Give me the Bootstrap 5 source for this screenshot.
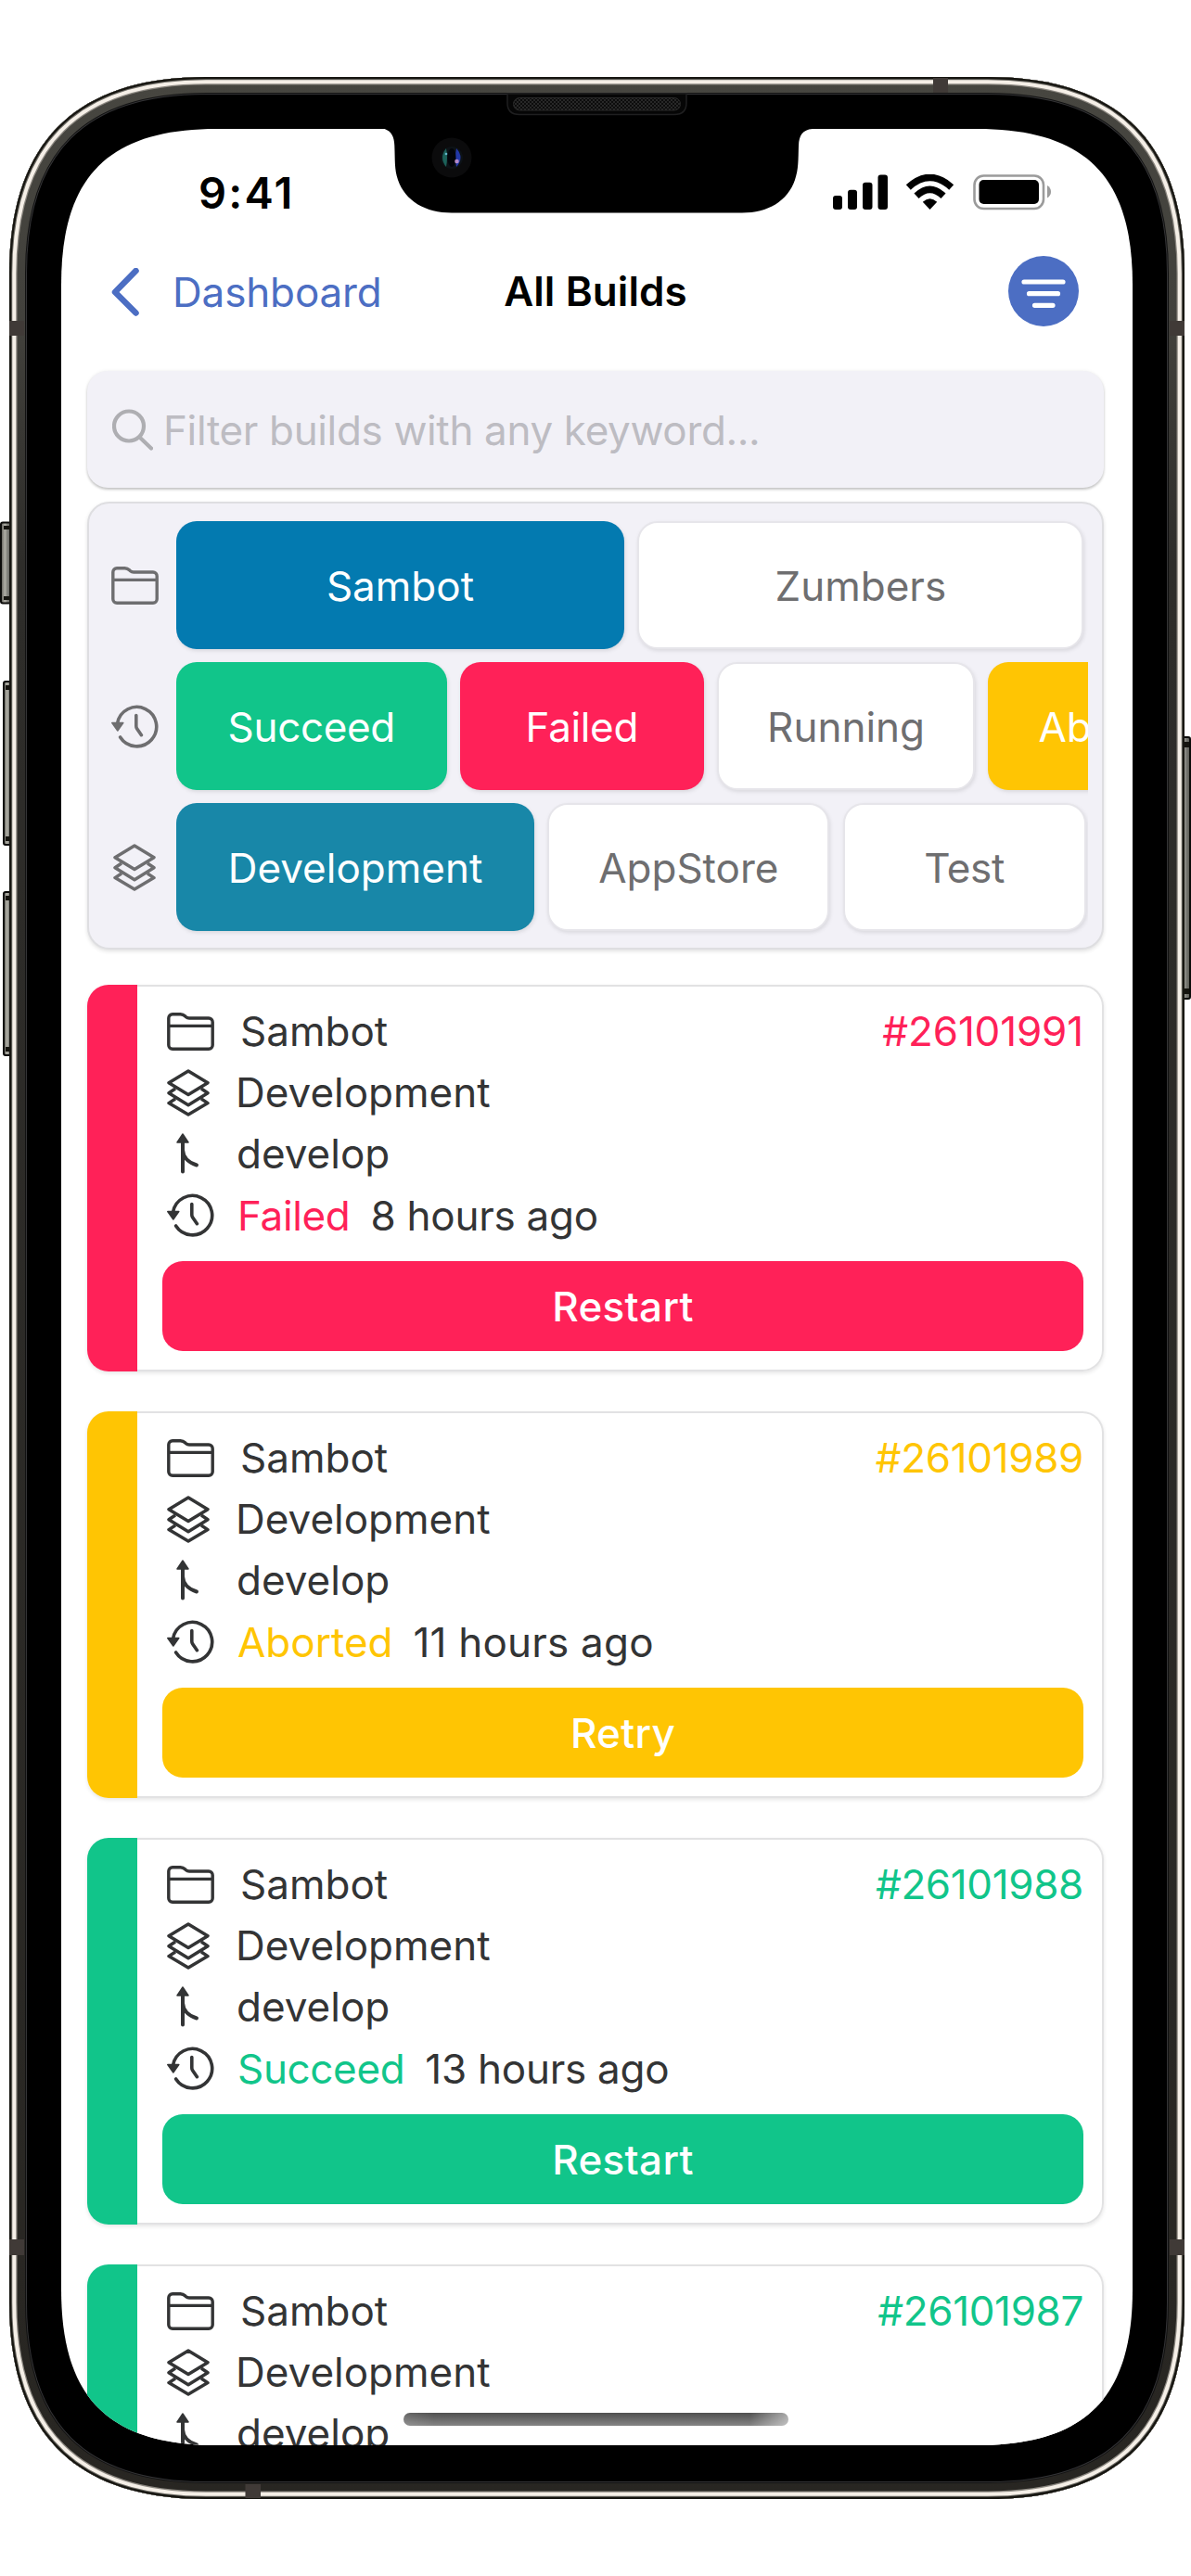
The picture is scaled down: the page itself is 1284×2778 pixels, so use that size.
<!DOCTYPE html>
<html lang="en">
<head>
<meta charset="utf-8">
<meta name="viewport" content="width=device-width, initial-scale=1">
<title>All Builds</title>
<link href="https://cdn.jsdelivr.net/npm/bootstrap@5.3.0/dist/css/bootstrap.min.css" rel="stylesheet">
<style>
  :root { --red:#ff2158; --amber:#ffc503; --green:#11c58a; --ink:#333435; --blue:#4c6ec3; --sheet:#f2f1f7; }
  body { background:#fff; font-family:Inter, "Liberation Sans", sans-serif; font-size:44px; line-height:1; color:var(--ink); }
  .phone { width:1284px; height:2778px; padding:139px 63px 0 66px; overflow:hidden; }
  .phone-art { left:0; top:0; pointer-events:none; }
  .phone-screen { width:1155px; height:2498px; background:#fff; overflow:hidden;
    clip-path:path("M0 168C0 51 51 0 168 0H987C1104 0 1155 51 1155 168V2330C1155 2447 1104 2498 987 2498H168C51 2498 0 2447 0 2330Z"); }
  .notch-art { left:0; top:0; }
  .status-bar { height:137px; padding:0 88px 0 148px; }
  .clock-text { font-size:47px; letter-spacing:2.2px; color:#000; }
  .top-nav { height:76px; padding:0 58px 0 53px; }
  .back-link { color:var(--blue); letter-spacing:-.15px; padding-top:2px; }
  .nav-title { left:0; right:3px; top:0; bottom:0; color:#000; letter-spacing:.1px; }
  .filter-btn { width:76px; height:76px; background:var(--blue); }
  .content-area { padding:48px 31px 0 28px; }
  .search-box { height:126px; border-radius:22px; background:var(--sheet); padding:1px 0 0 27px; color:#bdbcc2; letter-spacing:-.35px;
    box-shadow:0 2px 3px rgba(0,0,0,.22), 0 0 4px rgba(0,0,0,.06); }
  .search-box svg { margin-right:11px; }
  .filter-panel { margin-top:15px; height:483px; padding:19px 15px 18px 24px; gap:14px; border:2px solid #dedee1; border-radius:24px; background:var(--sheet);
    box-shadow:0 2px 4px rgba(0,0,0,.12); }
  .filter-row { height:138px; color:#6e6e70; }
  .filter-icon { width:70px; }
  .chip-strip { gap:14.3px; height:138px; min-width:0; overflow-x:clip; overflow-y:visible; }
  .chip { height:138px; padding-top:2px; border-radius:22px; background:#fff; border:2px solid #e6e5ea; color:#6e6e70; box-shadow:1px 2px 4px rgba(0,0,0,.1); }
  .chip-on { border-color:transparent; background-clip:border-box; background-origin:border-box; color:#fff; }
  .chip-blue { background-color:#037ab0; } .chip-teal { background-color:#1887a8; }
  .chip-green { background-color:var(--green); } .chip-red { background-color:var(--red); } .chip-amber { background-color:var(--amber); }
  .w-sambot { width:483px; } .w-zumbers { width:481px; }
  .w-succeed { width:291.5px; } .w-failed { width:263px; } .w-running { width:278px; } .w-aborted { width:298px; }
  .w-dev { width:386px; } .w-store { width:304px; } .w-test { width:262px; }
  .build-list { padding-top:38px; gap:43px; }
  .build { height:417px; border-radius:23px; box-shadow:0 2px 4px rgba(0,0,0,.1); --tone:var(--green); }
  .build-red { --tone:var(--red); } .build-amber { --tone:var(--amber); }
  .build-stripe { width:54px; background:var(--tone); border-radius:23px 0 0 23px; }
  .build-body { border:2px solid #e2e2e3; border-left:0; border-radius:0 23px 23px 0; padding:15px 20px 0 27px; background:#fff; }
  .build-line { height:66.2px; padding-left:5px; }
  .build-icon { width:74px; }
  .build-icon svg, .filter-icon svg { display:block; }
  .build-tone { color:var(--tone); }
  .build-id { color:var(--tone); letter-spacing:-.15px; }
  .when { margin-left:22px; letter-spacing:-.25px; }
  .build-btn, .build-btn:hover { margin-top:16px; height:97px; padding:2px 0 0; border-radius:22px; background:var(--tone); color:#fff; font-size:44px; line-height:1; font-weight:500; letter-spacing:.3px; }
  .nudge-1 { margin-left:1px; } .nudge-2 { margin-left:2px; } .nudge-5 { margin-left:5px; }
  .tight { letter-spacing:-.35px; } .airy { letter-spacing:.2px; }
  .home-bar { left:369px; top:2463px; width:415px; height:14px; border-radius:7px; background:linear-gradient(90deg,rgba(255,255,255,.12),transparent 8%,transparent 90%,rgba(255,255,255,.5)),linear-gradient(#505050,#848484); }
</style>
</head>
<body>
<svg width="0" height="0" class="position-absolute" fill="none">
  <symbol id="folder" viewBox="0 0 51 41"><path d="M1.8 6a4.2 4.2 0 0 1 4.2-4.2h8.5c2.5 0 3.6.6 5 2l1 1q1.4 1.2 3.5 1.2H45a4.2 4.2 0 0 1 4.2 4.2V35a4.2 4.2 0 0 1-4.2 4.2H6A4.2 4.2 0 0 1 1.8 35zM2 14.4h47" fill="none" stroke="currentColor" stroke-width="3.4"/></symbol>
  <symbol id="layers" viewBox="0 0 46 51"><path d="M23 2L44 14.7 23 27.6 2 14.7zM9 21L2 25.7l21 13 21-13L37 21M9 32l-7 4.600 21 12.400 21-12.400L37 32" fill="none" stroke="currentColor" stroke-width="3.5" stroke-linejoin="round"/></symbol>
  <symbol id="branch" viewBox="0 0 25 44"><path d="M7 7v34.500M7 18c.5 9 7 14 15 16.500" fill="none" stroke="currentColor" stroke-width="4" stroke-linecap="round"/><path d="M7 1l6 9H1z" fill="currentColor" stroke="currentColor" stroke-width="1.500" stroke-linejoin="round"/></symbol>
  <symbol id="history" viewBox="0 0 51 47"><path d="M6.600 20A21.200 21.200 0 1 1 9.600 35M26.800 11.500V23q0 1.500.8 2.700l4.800 7" fill="none" stroke="currentColor" stroke-width="3.600" stroke-linecap="round"/><path d="M.8 19.500h12L6.800 28z" fill="currentColor" stroke="currentColor" stroke-width="1.500" stroke-linejoin="round"/></symbol>
</svg>

<div class="phone position-relative">
  <svg class="phone-art position-absolute" width="1284" height="2778" viewBox="0 0 1284 2778" fill="none">
    <defs>
      <linearGradient id="steel" x1="0" y1="0" x2="0" y2="1"><stop offset="0" stop-color="#474640"/><stop offset=".1" stop-color="#42413c"/><stop offset=".2" stop-color="#2e2d2a"/><stop offset="1" stop-color="#282622"/></linearGradient>
      <linearGradient id="keyL" x1="0" y1="0" x2="1" y2="0"><stop offset="0" stop-color="#55544f"/><stop offset=".35" stop-color="#b0afa6"/><stop offset=".6" stop-color="#7d7d78"/><stop offset="1" stop-color="#55554f"/></linearGradient>
      <path id="body" d="M10 295C10 154 81 83 222 83H1065C1206 83 1277 154 1277 295V2483C1277 2624 1206 2695 1065 2695H222C81 2695 10 2624 10 2483Z"/>
      <clipPath id="bodyClip"><use href="#body"/></clipPath>
    </defs>
    <g stroke="#0b0b09" stroke-width="2" fill="url(#keyL)">
      <rect x="1" y="563.500" width="12" height="87" rx="2"/>
      <rect x="4" y="735" width="10" height="176" rx="2"/>
      <rect x="4" y="962" width="10" height="176" rx="2"/>
      <rect x="1272" y="795" width="11" height="282" rx="2"/>
    </g>
    <g fill="#15140f">
      <path d="M4 567h8v4H4zM4 643h8v4H4zM6 739h6v5H6zM6 902h6v5H6zM6 966h6v5H6zM6 1129h6v5H6zM1276 800h6v6h-6zM1276 1066h6v6h-6z"/>
    </g>
    <use href="#body" fill="#000"/>
    <g clip-path="url(#bodyClip)">
      <use href="#body" stroke="#343436" stroke-width="38"/>
      <use href="#body" stroke="#111" stroke-width="36"/>
      <use href="#body" stroke="url(#steel)" stroke-width="34"/>
      <use href="#body" stroke="#8b8780" stroke-width="17"/>
      <use href="#body" stroke="#f5efe7" stroke-width="14.500"/>
      <use href="#body" stroke="#6d6b65" stroke-width="6.500"/>
      <use href="#body" stroke="#171611" stroke-width="4.500"/>
      <path fill="#403a37" d="M10 346h16v16H10zM1261 346h16v16h-16zM10 2415h16v17H10zM1261 2415h16v17h-16zM1006 84h16v16h-16zM264.500 2679h16.500v15h-16.500z"/>
    </g>
  </svg>

  <div class="phone-screen position-relative">
    <div class="status-bar d-flex align-items-center justify-content-between">
      <span class="clock-text fw-semibold">9:41</span>
      <svg width="235" height="40" viewBox="898 188 235 40" fill="none">
        <g fill="#000"><rect x="898" y="211" width="10" height="15" rx="3"/><rect x="914" y="204.700" width="10" height="21.300" rx="3"/><rect x="930" y="196.700" width="10.500" height="29.300" rx="3"/><rect x="946.500" y="188.500" width="10.500" height="37.500" rx="3"/>
        <path d="M1002.500 226L994.800 217.800Q1002.500 210.800 1010.200 217.800Z"/></g>
        <path d="M979.300 202Q1002.500 181 1025.700 202M988 211.300Q1002.500 197.500 1017 211.300" stroke="#000" stroke-width="7.400"/>
        <rect x="1050.500" y="189.500" width="74.500" height="35.500" rx="10" stroke="#9b9b9b" stroke-width="2.600"/>
        <rect x="1055.500" y="194" width="64.500" height="26" rx="5" fill="#000"/>
        <path d="M1129 200q4 2.500 4 6.800t-4 6.800z" fill="#9b9b9b"/>
      </svg>
    </div>
    <div class="top-nav position-relative d-flex align-items-center justify-content-between">
      <a class="back-link d-flex align-items-center text-decoration-none position-relative z-1" href="#">
        <svg width="67" height="52" viewBox="0 0 67 52" fill="none"><path d="M27.500 3L5 26l22.500 22.500" stroke="currentColor" stroke-width="6.500" stroke-linecap="round" stroke-linejoin="round"/></svg>
        <span>Dashboard</span>
      </a>
      <div class="nav-title position-absolute d-flex align-items-center justify-content-center fw-semibold">All Builds</div>
      <button class="filter-btn btn p-0 border-0 rounded-circle position-relative z-1" aria-label="Filters">
        <svg class="d-block" width="76" height="76" viewBox="0 0 76 76" stroke="#fff" stroke-width="5.200" stroke-linecap="round"><path d="M17 28h42M22.500 40.700h31M28.500 53.300h19.500"/></svg>
      </button>
    </div>

    <div class="content-area">
      <div class="search-box d-flex align-items-center">
        <svg width="44" height="46" viewBox="0 0 44 46" fill="none" stroke="#aeaeb2" stroke-width="4.200" stroke-linecap="round"><circle cx="18" cy="18.500" r="16"/><path d="M29.500 30.500L42 42.500"/></svg>
        <span>Filter builds with any keyword...</span>
      </div>

      <div class="filter-panel d-flex flex-column">
        <div class="filter-row d-flex align-items-center">
          <div class="filter-icon flex-shrink-0"><svg width="51" height="41"><use href="#folder"/></svg></div>
          <div class="chip-strip d-flex flex-grow-1">
            <div class="chip chip-on chip-blue w-sambot flex-shrink-0 d-flex align-items-center justify-content-center">Sambot</div>
            <div class="chip w-zumbers flex-shrink-0 d-flex align-items-center justify-content-center">Zumbers</div>
          </div>
        </div>
        <div class="filter-row d-flex align-items-center">
          <div class="filter-icon flex-shrink-0"><svg width="51" height="47"><use href="#history"/></svg></div>
          <div class="chip-strip d-flex flex-grow-1">
            <div class="chip chip-on chip-green w-succeed tight flex-shrink-0 d-flex align-items-center justify-content-center">Succeed</div>
            <div class="chip chip-on chip-red w-failed tight flex-shrink-0 d-flex align-items-center justify-content-center">Failed</div>
            <div class="chip w-running flex-shrink-0 d-flex align-items-center justify-content-center">Running</div>
            <div class="chip chip-on chip-amber w-aborted flex-shrink-0 d-flex align-items-center"><span class="ps-5 ms-1">Aborted</span></div>
          </div>
        </div>
        <div class="filter-row d-flex align-items-center">
          <div class="filter-icon flex-shrink-0"><svg class="nudge-2" width="46" height="51"><use href="#layers"/></svg></div>
          <div class="chip-strip d-flex flex-grow-1">
            <div class="chip chip-on chip-teal w-dev flex-shrink-0 d-flex align-items-center justify-content-center">Development</div>
            <div class="chip w-store flex-shrink-0 d-flex align-items-center justify-content-center">AppStore</div>
            <div class="chip w-test tight flex-shrink-0 d-flex align-items-center justify-content-center">Test</div>
          </div>
        </div>
      </div>

      <div class="build-list d-flex flex-column">
        <article class="build build-red d-flex flex-shrink-0">
          <div class="build-stripe"></div>
          <div class="build-body flex-grow-1">
            <div class="build-line d-flex align-items-center"><div class="build-icon"><svg width="51" height="41"><use href="#folder"/></svg></div><span class="nudge-5">Sambot</span><span class="build-id ms-auto">#26101991</span></div>
            <div class="build-line d-flex align-items-center"><div class="build-icon"><svg width="46" height="51"><use href="#layers"/></svg></div><span>Development</span></div>
            <div class="build-line d-flex align-items-center"><div class="build-icon ps-2"><svg class="nudge-2" width="25" height="44"><use href="#branch"/></svg></div><span class="nudge-1">develop</span></div>
            <div class="build-line d-flex align-items-center"><div class="build-icon"><svg width="51" height="47"><use href="#history"/></svg></div><span class="build-tone tight nudge-2">Failed</span><span class="when">8 hours ago</span></div>
            <button class="build-btn btn border-0 w-100 d-flex align-items-center justify-content-center">Restart</button>
          </div>
        </article>

        <article class="build build-amber d-flex flex-shrink-0">
          <div class="build-stripe"></div>
          <div class="build-body flex-grow-1">
            <div class="build-line d-flex align-items-center"><div class="build-icon"><svg width="51" height="41"><use href="#folder"/></svg></div><span class="nudge-5">Sambot</span><span class="build-id tight ms-auto">#26101989</span></div>
            <div class="build-line d-flex align-items-center"><div class="build-icon"><svg width="46" height="51"><use href="#layers"/></svg></div><span>Development</span></div>
            <div class="build-line d-flex align-items-center"><div class="build-icon ps-2"><svg class="nudge-2" width="25" height="44"><use href="#branch"/></svg></div><span class="nudge-1">develop</span></div>
            <div class="build-line d-flex align-items-center"><div class="build-icon"><svg width="51" height="47"><use href="#history"/></svg></div><span class="build-tone nudge-2">Aborted</span><span class="when airy">11 hours ago</span></div>
            <button class="build-btn btn border-0 w-100 d-flex align-items-center justify-content-center">Retry</button>
          </div>
        </article>

        <article class="build d-flex flex-shrink-0">
          <div class="build-stripe"></div>
          <div class="build-body flex-grow-1">
            <div class="build-line d-flex align-items-center"><div class="build-icon"><svg width="51" height="41"><use href="#folder"/></svg></div><span class="nudge-5">Sambot</span><span class="build-id tight ms-auto">#26101988</span></div>
            <div class="build-line d-flex align-items-center"><div class="build-icon"><svg width="46" height="51"><use href="#layers"/></svg></div><span>Development</span></div>
            <div class="build-line d-flex align-items-center"><div class="build-icon ps-2"><svg class="nudge-2" width="25" height="44"><use href="#branch"/></svg></div><span class="nudge-1">develop</span></div>
            <div class="build-line d-flex align-items-center"><div class="build-icon"><svg width="51" height="47"><use href="#history"/></svg></div><span class="build-tone tight nudge-2">Succeed</span><span class="when">13 hours ago</span></div>
            <button class="build-btn btn border-0 w-100 d-flex align-items-center justify-content-center">Restart</button>
          </div>
        </article>

        <article class="build d-flex flex-shrink-0">
          <div class="build-stripe"></div>
          <div class="build-body flex-grow-1">
            <div class="build-line d-flex align-items-center"><div class="build-icon"><svg width="51" height="41"><use href="#folder"/></svg></div><span class="nudge-5">Sambot</span><span class="build-id tight ms-auto">#26101987</span></div>
            <div class="build-line d-flex align-items-center"><div class="build-icon"><svg width="46" height="51"><use href="#layers"/></svg></div><span>Development</span></div>
            <div class="build-line d-flex align-items-center"><div class="build-icon ps-2"><svg class="nudge-2" width="25" height="44"><use href="#branch"/></svg></div><span class="nudge-1">develop</span></div>
          </div>
        </article>
      </div>
    </div>

    <!-- notch with camera -->
    <svg class="notch-art position-absolute" width="1155" height="100" viewBox="66 139 1155 100">
      <path d="M405 138H411C421 140 425 146 425.300 157C426 173 425 182 429 194C437 217 459 229.500 487 229.500H800C828 229.500 849 217 857 194C861 182 860.500 173 861 157C861.500 146 865 140 876 139V138Z" fill="#000"/>
      <circle cx="487" cy="170" r="21.500" fill="#0b0b0c"/>
      <circle cx="487" cy="170" r="12" fill="#0d1216"/>
      <path d="M481 160q-8 10 0 20q2-10 0-20z" fill="#1c6159"/><path d="M492 160q9 10 0 20q-2-10 0-20z" fill="#2238a8"/>
      <ellipse cx="487" cy="170" rx="4.500" ry="10" fill="#02040a"/><circle cx="492.500" cy="174" r="2.300" fill="#b389c9"/><circle cx="481" cy="166" r="1.300" fill="#5fb5c9"/>
    </svg>
    <div class="home-bar position-absolute"></div>
  </div>

  <svg class="phone-art position-absolute" width="1284" height="130" viewBox="0 0 1284 130" fill="none">
    <defs><pattern id="mesh" width="4" height="4" patternUnits="userSpaceOnUse"><rect width="4" height="4" fill="#0c0c0c"/><path d="M0 0l2 2M4 0L2 2l-2 2M4 4L2 2" stroke="#303030" stroke-width=".8"/></pattern></defs>
    <path d="M547 101V111Q547 123.500 560 123.500H727Q740 123.500 740 111V101Z" fill="#060606" stroke="#1f1f20" stroke-width="1.500"/>
    <rect x="553.500" y="105.500" width="180" height="13.500" rx="6.700" fill="url(#mesh)" stroke="#292929"/>
  </svg>
</div>
<script src="https://cdn.jsdelivr.net/npm/bootstrap@5.3.0/dist/js/bootstrap.bundle.min.js"></script>
</body>
</html>
